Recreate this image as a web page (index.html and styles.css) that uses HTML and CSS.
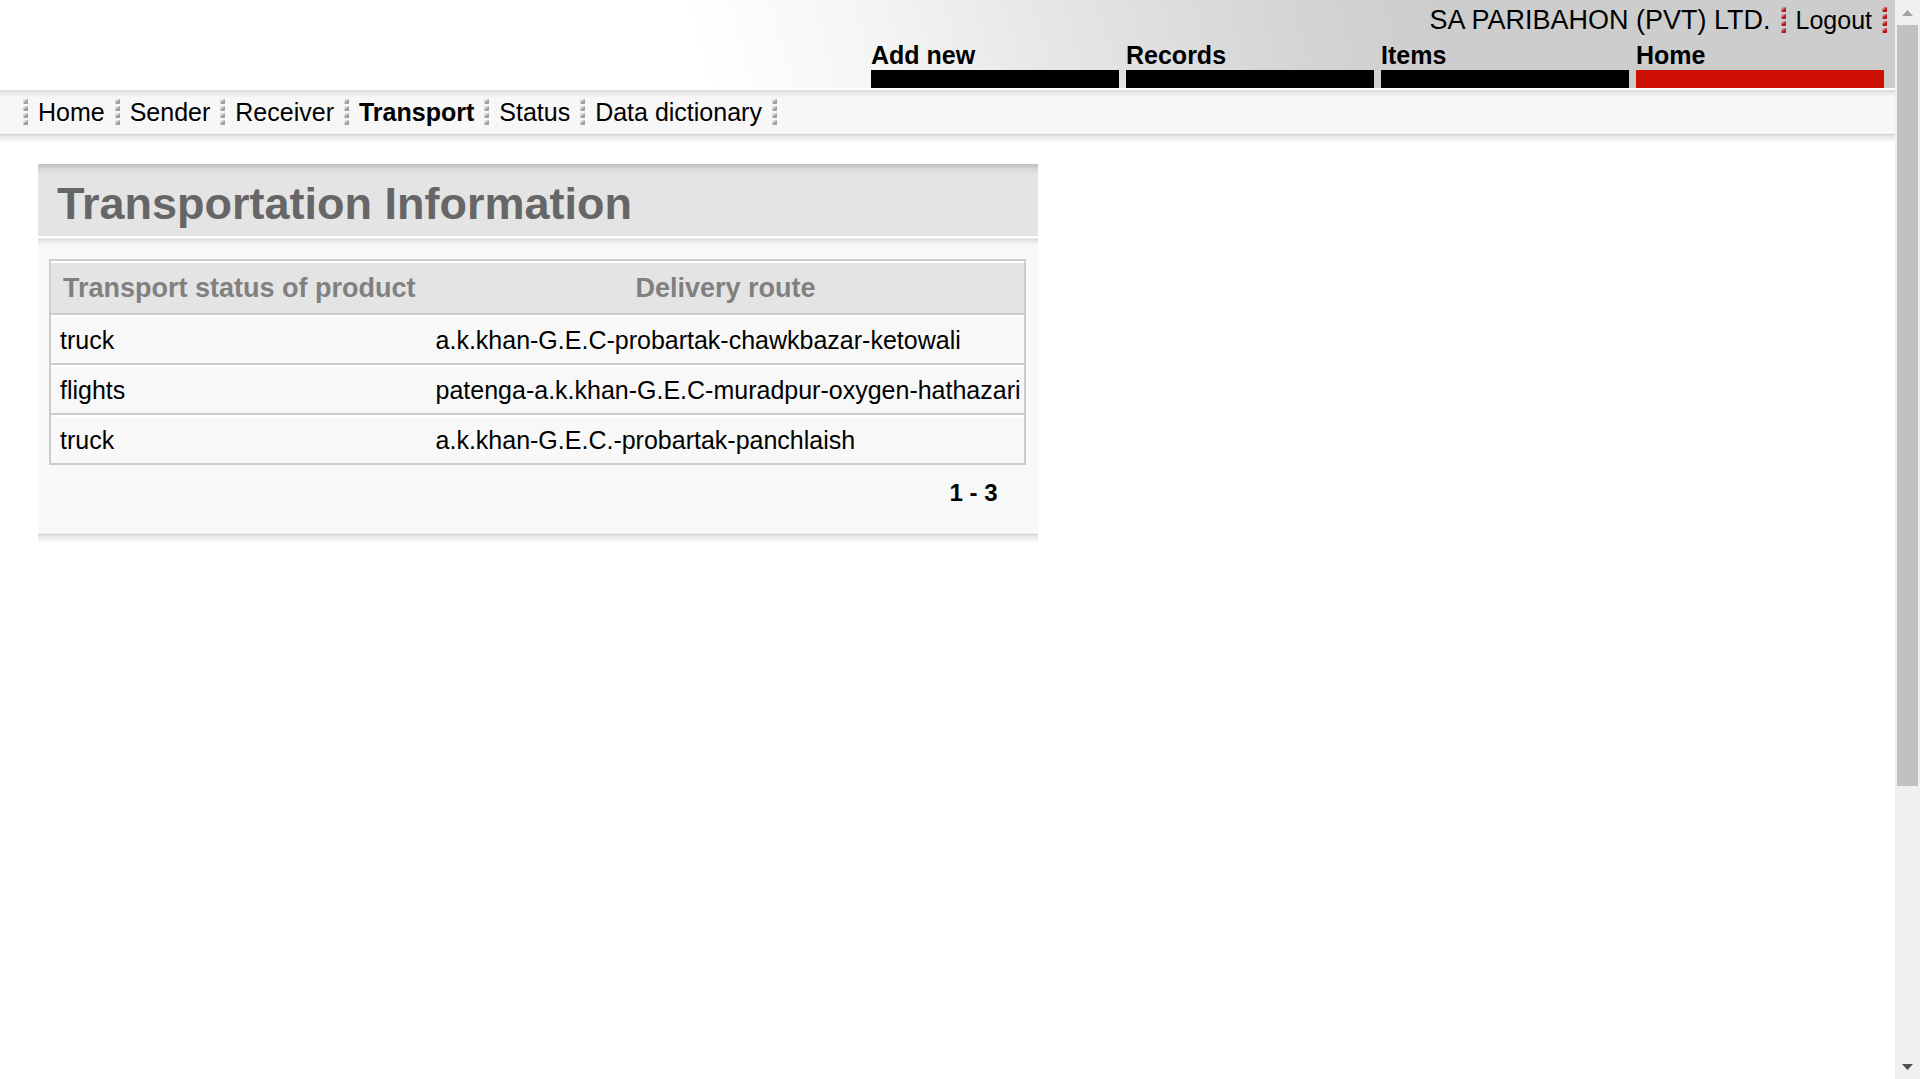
FILE: index.html
```html
<!DOCTYPE html>
<html lang="en">
<head>
<meta charset="utf-8">
<title>Transportation Information</title>
<link rel="stylesheet" href="styles.css">
</head>
<body>
<svg class="defs" aria-hidden="true">
  <symbol id="grip" viewBox="0 0 5 26">
    <path opacity=".4" d="M0 2 2 0H5V5H0ZM0 9 2 7H5V12H0ZM0 16 2 14H5V19H0ZM0 23 2 21H5V26H0Z"/>
    <path d="M5 0V5H1V3L3 2ZM5 7V12H1V10L3 9ZM5 14V19H1V17L3 16ZM5 21V26H1V24L3 23Z"/>
  </symbol>
</svg>
<div class="window">
  <div class="page">
    <header class="header">
      <div class="account">
        <span class="company">SA PARIBAHON (PVT) LTD.</span>
        <svg class="grip grip-red" aria-hidden="true"><use href="#grip"/></svg>
        <a class="link" href="#">Logout</a>
        <svg class="grip grip-red" aria-hidden="true"><use href="#grip"/></svg>
      </div>
      <nav class="tabs">
        <a class="tab" href="#">Add new</a>
        <a class="tab" href="#">Records</a>
        <a class="tab" href="#">Items</a>
        <a class="tab tab-active" href="#">Home</a>
      </nav>
    </header>
    <nav class="menu">
      <svg class="grip" aria-hidden="true"><use href="#grip"/></svg>
      <a class="link" href="#">Home</a>
      <svg class="grip" aria-hidden="true"><use href="#grip"/></svg>
      <a class="link" href="#">Sender</a>
      <svg class="grip" aria-hidden="true"><use href="#grip"/></svg>
      <a class="link" href="#">Receiver</a>
      <svg class="grip" aria-hidden="true"><use href="#grip"/></svg>
      <a class="link link-current" href="#">Transport</a>
      <svg class="grip" aria-hidden="true"><use href="#grip"/></svg>
      <a class="link" href="#">Status</a>
      <svg class="grip" aria-hidden="true"><use href="#grip"/></svg>
      <a class="link" href="#">Data dictionary</a>
      <svg class="grip" aria-hidden="true"><use href="#grip"/></svg>
    </nav>
    <div class="edge"></div>
    <main class="panel">
      <h1 class="title">Transportation Information</h1>
      <div class="content">
        <table class="records">
          <thead>
            <tr><th scope="col">Transport status of product</th><th scope="col">Delivery route</th></tr>
          </thead>
          <tbody>
            <tr><td>truck</td><td>a.k.khan-G.E.C-probartak-chawkbazar-ketowali</td></tr>
            <tr><td>flights</td><td>patenga-a.k.khan-G.E.C-muradpur-oxygen-hathazari</td></tr>
            <tr><td>truck</td><td>a.k.khan-G.E.C.-probartak-panchlaish</td></tr>
          </tbody>
        </table>
        <p class="pager">1 - 3</p>
      </div>
      <div class="edge"></div>
    </main>
  </div>
  <div class="scrollbar" aria-hidden="true">
    <svg class="arrow arrow-up" viewBox="0 0 25 25"><path d="M7 16 12.500 10 18 16Z"/></svg>
    <div class="track"><div class="thumb"></div></div>
    <svg class="arrow" viewBox="0 0 25 25"><path d="M7 10 12.500 16 18 10Z"/></svg>
  </div>
</div>
</body>
</html>
```
FILE: styles.css
```css
* {
  box-sizing: border-box;
}

body {
  margin: 0;
  background: #fff;
  color: #000;
  font: 25px/30px "Liberation Sans", Arial, sans-serif;
}

a {
  color: inherit;
  text-decoration: none;
}

.defs {
  position: absolute;
  width: 0;
  height: 0;
}

.window {
  display: flex;
  height: 100vh;
}

.page {
  flex: 1;
  min-width: 0;
  overflow: hidden;
}

/* Header */
.header {
  display: flex;
  flex-direction: column;
  gap: 5px;
  padding-top: 5px;
  background: linear-gradient(75deg, #fff calc(100% - 1170px), #f5f5f5 calc(100% - 1000px), #e6e6e6 calc(100% - 820px), #d4d4d4 calc(100% - 580px), #cdcdcd calc(100% - 450px));
}

.account {
  display: flex;
  align-items: center;
  justify-content: flex-end;
  gap: 10px;
  padding-right: 8px;
}

.company {
  font-size: 27px;
}

.grip {
  flex: none;
  width: 5px;
  height: 26px;
  fill: #a0a0a0;
}

.grip-red {
  fill: #bb1a1a;
}

.tabs {
  display: flex;
  justify-content: flex-end;
  gap: 7px;
  padding-right: 11px;
}

.tab {
  width: 248px;
  border-bottom: 18px solid #000;
  font-weight: bold;
}

.tab-active {
  border-color: #ce1007;
}

/* Menu bar */
.menu {
  display: flex;
  align-items: center;
  gap: 10px;
  padding: 9px 23px 5px;
  background: linear-gradient(#fff 2px, #dadada 2px, #eee 6px, #f7f7f7 10px);
}

.link-current {
  font-weight: bold;
}

.edge {
  height: 11px;
  background: linear-gradient(#fff 1px, #d6d6d6 2px, #eee 6px, #fff 11px);
}

/* Panel */
.panel {
  width: fit-content;
  margin: 21px 38px;
}

.title {
  margin: 0;
  padding: 15px 19px 7px;
  background: linear-gradient(#bdbdbd, #d8d8d8 5px, #e4e4e4 11px);
  color: #666;
  font-size: 45px;
  line-height: 50px;
}

.content {
  padding: 23px 12px 24px 11px;
  background: linear-gradient(#fff 2px, #dadada 3px, #eee 6px, #f8f8f8 10px);
}

.records {
  border: 2px solid #ccc;
  border-top: 0;
  border-spacing: 0;
}

.records th,
.records td {
  border-top: 2px solid #ccc;
  white-space: nowrap;
  box-shadow: inset 0 2px #fff;
}

.records th {
  padding: 12px 11px 10px 12px;
  background: #e4e4e4;
  color: #808080;
  font-size: 27px;
}

.records td {
  padding: 10px 3px 8px 9px;
}

.pager {
  margin: 13px 28px 0;
  font-size: 24px;
  font-weight: bold;
  text-align: right;
}

/* Scroll bar */
.scrollbar {
  display: flex;
  flex: none;
  flex-direction: column;
  width: 25px;
  background: #f0f0f0;
}

.arrow {
  flex: none;
  width: 25px;
  height: 25px;
  fill: #505050;
}

.arrow-up {
  fill: #a3a3a3;
}

.track {
  flex: 1;
  padding: 0 2px;
}

.thumb {
  height: 74%;
  background: #c1c1c1;
}
```
